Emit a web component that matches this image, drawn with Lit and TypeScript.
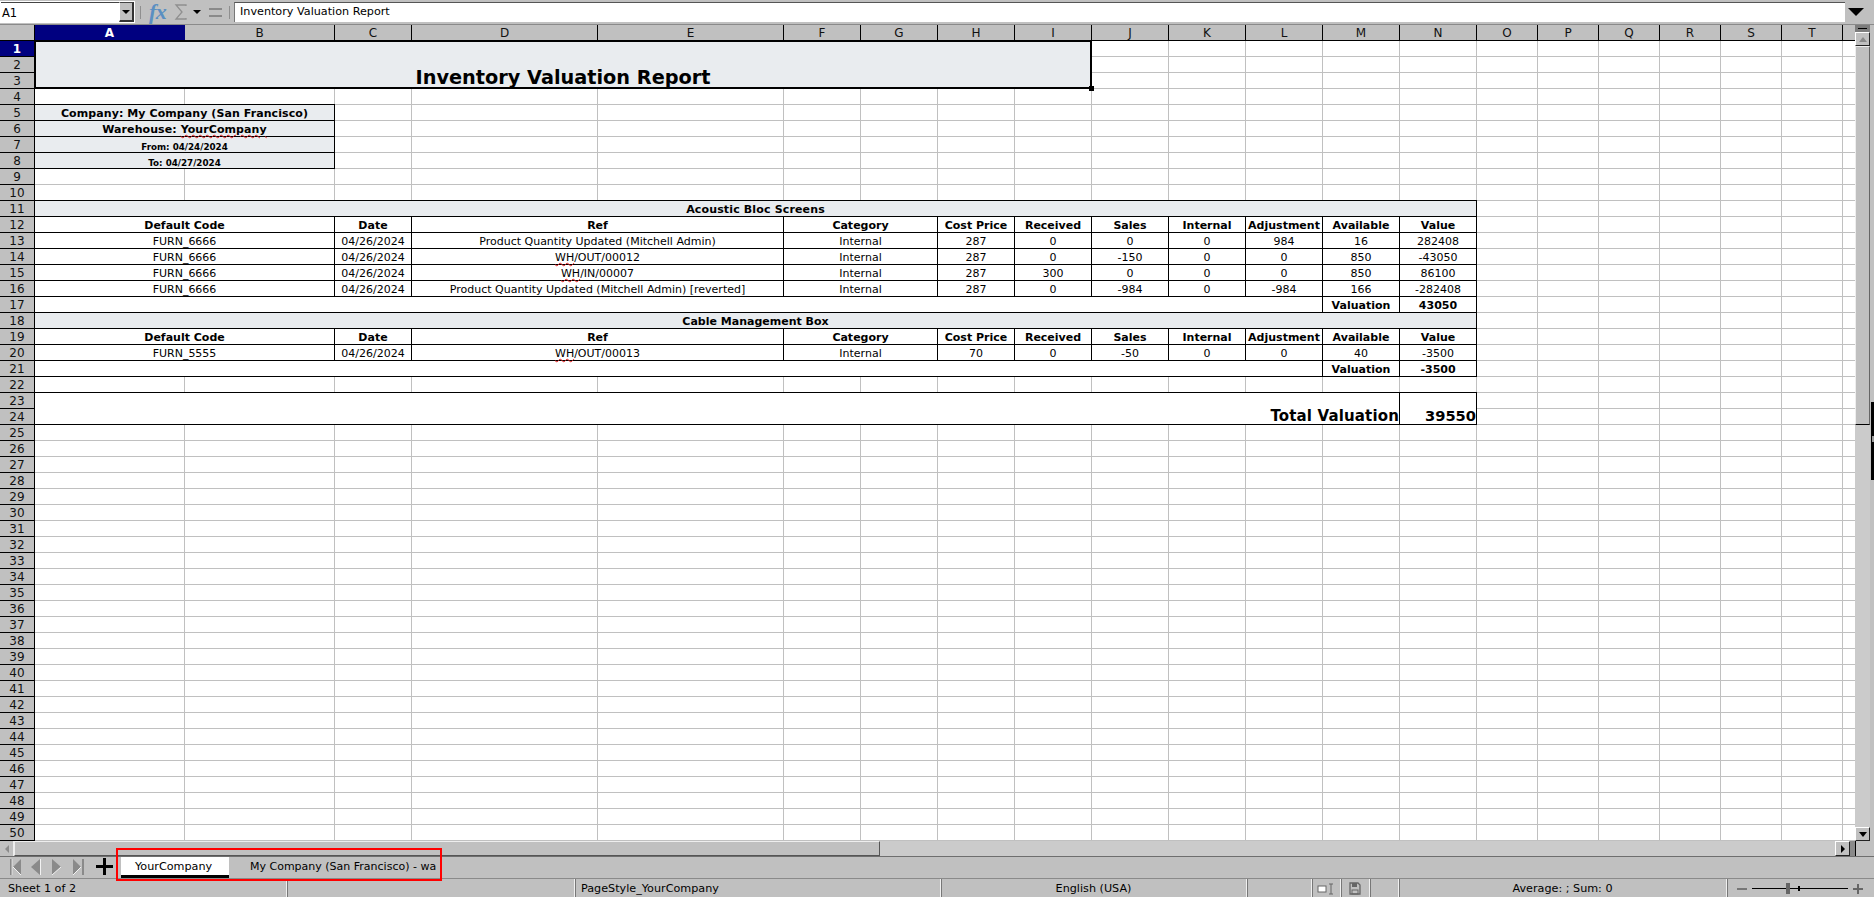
import { LitElement, html, css, svg, nothing } from "lit";
import { customElement } from "lit/decorators.js";

const COLS = [150, 150, 77, 186, 186, 77, 77, 77, 77, 77, 77, 77, 77, 77, 61, 61, 61, 61, 61, 61, 13];
const LETTERS = "ABCDEFGHIJKLMNOPQRST";
const ROWS = 50;

interface Cell {
  c: number; r: number; cs?: number; rs?: number;
  t?: unknown; k?: string;
}

const wh = (rest: string) => html`<span class="sq">WH</span>${rest}`;

function tableRow(r: number, vals: unknown[], k: string): Cell[] {
  const out: Cell[] = [];
  const spans: [number, number][] = [[1, 2], [3, 1], [4, 2], [6, 2], [8, 1], [9, 1], [10, 1], [11, 1], [12, 1], [13, 1], [14, 1]];
  spans.forEach(([c, cs], i) => out.push({ c, r, cs, t: vals[i], k }));
  return out;
}
const HEAD = ["Default Code", "Date", "Ref", "Category", "Cost Price", "Received", "Sales", "Internal", "Adjustment", "Available", "Value"];

const CELLS: Cell[] = [
  { c: 1, r: 1, cs: 9, rs: 3, t: "Inventory Valuation Report", k: "title" },
  { c: 1, r: 5, cs: 2, t: "Company: My Company (San Francisco)", k: "b fill bold wide" },
  { c: 1, r: 6, cs: 2, t: html`Warehouse: <span class="sq">YourCompany</span>`, k: "b fill bold wide" },
  { c: 1, r: 7, cs: 2, t: "From: 04/24/2024", k: "b fill bold small" },
  { c: 1, r: 8, cs: 2, t: "To: 04/27/2024", k: "b fill bold small" },
  { c: 1, r: 11, cs: 14, t: "Acoustic Bloc Screens", k: "b fill bold wider" },
  ...tableRow(12, HEAD, "b bold"),
  ...tableRow(13, ["FURN_6666", "04/26/2024", "Product Quantity Updated (Mitchell Admin)", "Internal", "287", "0", "0", "0", "984", "16", "282408"], "b"),
  ...tableRow(14, ["FURN_6666", "04/26/2024", wh("/OUT/00012"), "Internal", "287", "0", "-150", "0", "0", "850", "-43050"], "b"),
  ...tableRow(15, ["FURN_6666", "04/26/2024", wh("/IN/00007"), "Internal", "287", "300", "0", "0", "0", "850", "86100"], "b"),
  ...tableRow(16, ["FURN_6666", "04/26/2024", "Product Quantity Updated (Mitchell Admin) [reverted]", "Internal", "287", "0", "-984", "0", "-984", "166", "-282408"], "b"),
  { c: 1, r: 17, cs: 12, k: "b" },
  { c: 13, r: 17, t: "Valuation", k: "b bold" },
  { c: 14, r: 17, t: "43050", k: "b bold" },
  { c: 1, r: 18, cs: 14, t: "Cable Management Box", k: "b fill bold" },
  ...tableRow(19, HEAD, "b bold"),
  ...tableRow(20, ["FURN_5555", "04/26/2024", wh("/OUT/00013"), "Internal", "70", "0", "-50", "0", "0", "40", "-3500"], "b"),
  { c: 1, r: 21, cs: 12, k: "b" },
  { c: 13, r: 21, t: "Valuation", k: "b bold" },
  { c: 14, r: 21, t: "-3500", k: "b bold" },
  { c: 1, r: 23, cs: 13, rs: 2, t: "Total Valuation", k: "b bold total right" },
  { c: 14, r: 23, rs: 2, t: "39550", k: "b bold sum right" },
];

function buildCells(): Cell[] {
  const used = new Set<string>();
  CELLS.forEach((x) => {
    for (let r = x.r; r < x.r + (x.rs ?? 1); r++)
      for (let c = x.c; c < x.c + (x.cs ?? 1); c++) used.add(`${r}:${c}`);
  });
  const all = [...CELLS];
  for (let r = 1; r <= ROWS; r++)
    for (let c = 1; c <= COLS.length; c++)
      if (!used.has(`${r}:${c}`)) all.push({ c, r });
  all.sort((a, b) => a.r - b.r || a.c - b.c);
  return all;
}

@customElement("app-root")
export class AppRoot extends LitElement {
  static styles = css`
    :host {
      display: flex; flex-direction: column; width: 1874px; height: 897px; overflow: hidden;
      position: relative; background: #c0c0c0; color: #000;
      font-family: "DejaVu Sans", sans-serif; font-size: 11px;
    }
    .formula { height: 25px; flex: none; display: flex; align-items: center; box-sizing: border-box; border-bottom: 1px solid #8a8a8a; }
    .namebox { width: 135px; height: 22px; box-sizing: border-box; background: #fff; border: 1px solid #fff; display: flex; margin-right: 5px; flex: none; }
    .nameinput { flex: 1; font-size: 11.5px; line-height: 20px; padding-left: 1px; border-top: 1px solid #444; }
    .namebtn { width: 15px; background: #c0c0c0; border: 1px solid #333; border-left-color: #fff; border-top-color: #444; border-bottom-width: 2px; border-right-width: 2px; box-sizing: border-box; display: flex; align-items: center; justify-content: center; }
    .tri { width: 0; height: 0; border-left: 4px solid transparent; border-right: 4px solid transparent; border-top: 4px solid #000; }
    .vsep { width: 1px; height: 13px; background: #8f8f8f; flex: none; }
    .fx { font-family: "Liberation Serif", serif; font-style: italic; font-weight: bold; font-size: 22px; color: #5a8fc2; width: 20px; margin-left: 8px; line-height: 20px; letter-spacing: -0.5px; flex: none; }
    .sigma { width: 14px; height: 16px; margin-left: 5px; flex: none; }
    .tri.small { margin-left: 5px; margin-right: 8px; flex: none; }
    .eq { width: 13px; height: 9px; border-top: 2px solid #8a8a8a; border-bottom: 2px solid #8a8a8a; box-sizing: border-box; flex: none; margin-right: 7px; }
    .finput { width: 1611px; height: 20px; margin-left: 4px; box-sizing: border-box; background: #fff; border-top: 1px solid #555; border-left: 1px solid #777; font-size: 11.2px; line-height: 17px; padding-left: 5px; flex: none; }
    .fdrop { flex: none; margin-left: 3px; width: 0; height: 0; border-left: 8px solid transparent; border-right: 8px solid transparent; border-top: 8px solid #000; }

    .main { display: flex; flex: none; height: 816px; }
    .sheet { flex: none; width: 1855px; height: 816px; overflow: hidden; display: grid; background: #fff; }
    .h { background: #c0c0c0; box-sizing: border-box; border-right: 1px solid #000; border-bottom: 1px solid #000; display: flex; align-items: center; justify-content: center; font-size: 12px; color: #111; line-height: 1; }
    .h.on { background: #000080; color: #fff; font-weight: bold; }
    .h.colon { border-right-color: #000080; }
    .cell { box-sizing: border-box; border-right: 1px solid #c0c0c0; border-bottom: 1px solid #c0c0c0; display: flex; align-items: flex-end; justify-content: center; white-space: nowrap; line-height: 13px; background: #fff; font-size: 11px; }
    .cell.b { border-right-color: #000; border-bottom-color: #000; box-shadow: -1px 0 0 #000, 0 -1px 0 #000, -1px -1px 0 #000; }
    .fill { background: #e9ecef !important; }
    .bold { font-weight: bold; }
    .wide { letter-spacing: 0.08px; }
    .wider { letter-spacing: 0.15px; }
    .small { font-size: 8.75px; line-height: 9px; }
    .total { font-size: 15px; line-height: 16px; letter-spacing: 0.15px; }
    .sum { font-size: 14.67px; line-height: 16px; }
    .right { justify-content: flex-end; }
    .title { position: relative; z-index: 1; background: #e9ecef; border: 2px solid #000; border-left-width: 1px; border-top-width: 1px; box-shadow: -1px 0 0 #000, 0 -1px 0 #000; font-size: 19.3px; font-weight: bold; line-height: 19px; }
    .handle { position: absolute; right: -4px; bottom: -4px; width: 5px; height: 5px; background: #000; }
    .sq { position: relative; z-index: 2; text-decoration: underline wavy #e02020 1px; text-underline-offset: 1px; }

    .vbar { width: 19px; flex: none; display: flex; flex-direction: column; position: relative; box-sizing: border-box; border-right: 4px solid #c0c0c0; }
    .vhead { height: 7px; background: #7d7d7d; display: flex; align-items: center; justify-content: center; flex: none; }
    .vhead i { display: block; width: 9px; height: 1px; background: #000; }
    .sbtn { height: 14px; flex: none; background: #c0c0c0; border: 1px solid #fff; border-right-color: #222; border-bottom-color: #222; box-sizing: border-box; display: flex; align-items: center; justify-content: center; }
    .up { width: 0; height: 0; border-left: 4px solid transparent; border-right: 4px solid transparent; border-bottom: 5px solid #8a8a8a; }
    .down { width: 0; height: 0; border-left: 4px solid transparent; border-right: 4px solid transparent; border-top: 5px solid #000; }
    .vthumb { height: 379px; flex: none; background: #c0c0c0; border: 1px solid #eee; border-right-color: #666; border-bottom-color: #000; box-sizing: border-box; }
    .vtrack { flex: 1; background: #cbcbcb; }

    .hbar { height: 15px; flex: none; display: flex; background: #cbcbcb; }
    .hbtn { width: 14px; background: #c0c0c0; flex: none; display: flex; align-items: center; justify-content: center; border-right: 1px solid #eee; box-sizing: border-box; }
    .lt { width: 0; height: 0; border-top: 4px solid transparent; border-bottom: 4px solid transparent; border-right: 4px solid #8a8a8a; }
    .rt { width: 0; height: 0; border-top: 4px solid transparent; border-bottom: 4px solid transparent; border-left: 4px solid #000; }
    .hthumb { width: 866px; background: #c0c0c0; border: 1px solid #eee; border-right-color: #555; border-bottom-color: #555; box-sizing: border-box; flex: none; }
    .hspace { flex: 1; }
    .hbtnr { width: 15px; flex: none; background: #c0c0c0; border: 1px solid #fff; border-right-color: #222; border-bottom-color: #222; box-sizing: border-box; display: flex; align-items: center; justify-content: center; }
    .hend { width: 24px; flex: none; background: #c0c0c0; display: flex; }
    .hend i { display: block; width: 5px; background: #8a8a8a; border-right: 1px solid #000; }

    .tabs { height: 22px; flex: none; box-sizing: border-box; border-top: 1px solid #6e6e6e; display: flex; align-items: stretch; }
    .nav { width: 96px; display: flex; align-items: center; padding: 0 0 1px 10px; box-sizing: border-box; gap: 7px; flex: none; }
    .nav svg { width: 14px; height: 18px; flex: none; display: block; }
    .plus { width: 17px; height: 17px; flex: none; margin-top: 1px; }
    .tab { font-size: 11.2px; display: flex; align-items: center; box-sizing: border-box; white-space: nowrap; height: 21px; flex: none; }
    .tab.active { margin-left: 8px; width: 108px; background: #fff; border-bottom: 3px solid #000; padding-left: 14px; }
    .tab.other { margin-left: 21px; font-size: 11px; padding-bottom: 3px; }

    .status { height: 20px; flex: none; display: flex; box-sizing: border-box; border-top: 1px solid #8a8a8a; font-size: 11.2px; align-items: stretch; line-height: 19px; }
    .sec { box-sizing: border-box; border-right: 1px solid #f0f0f0; box-shadow: 1px 0 0 #777; flex: none; white-space: nowrap; display: flex; align-items: center; }
    .sec.c { justify-content: center; }
    .s1 { width: 287px; padding-left: 8px; }
    .s2 { width: 288px; }
    .s3 { width: 366px; padding-left: 6px; }
    .s3b { width: 306px; }
    .s4 { width: 65px; }
    .s5 { width: 29px; }
    .s6 { width: 29px; }
    .s7 { width: 29px; }
    .s8 { width: 328px; }
    .zoom { flex: 1; position: relative; display: flex; align-items: center; padding-left: 10px; gap: 5px; }
    .zm { width: 10px; height: 2px; background: #777; flex: none; }
    .track { width: 96px; height: 1px; background: #000; position: relative; flex: none; }
    .zthumb { position: absolute; left: 34px; top: -5px; width: 4px; height: 11px; background: #666; }
    .ztick { position: absolute; left: 46px; top: -2px; width: 2px; height: 5px; background: #000; }
    .zplus { width: 10px; height: 10px; flex: none; }

    .redbox { position: absolute; left: 116px; top: 848px; width: 326px; height: 33px; box-sizing: border-box; border: 2px solid #f00; pointer-events: none; }
    .edge { position: absolute; left: 1871px; top: 402px; width: 3px; height: 78px; background: #000; }
    .edge i { position: absolute; left: 1px; top: 34px; width: 2px; height: 6px; background: #999; display: block; }
  `;

  private renderSheet() {
    const cols = `35px ${COLS.map((w) => w + "px").join(" ")}`;
    const rows = `16px repeat(${ROWS}, 16px)`;
    const byRow = buildCells();
    let idx = 0;
    const out: unknown[] = [];
    out.push(html`<div class="h" style="grid-column:1;grid-row:1"></div>`);
    COLS.forEach((_, i) => {
      const l = LETTERS[i] ?? "";
      out.push(html`<div class="h ${i === 0 ? "on colon" : ""}" style="grid-column:${i + 2};grid-row:1">${l}</div>`);
    });
    for (let r = 1; r <= ROWS; r++) {
      out.push(html`<div class="h ${r === 1 ? "on" : ""}" style="grid-column:1;grid-row:${r + 1}">${r}</div>`);
      while (idx < byRow.length && byRow[idx].r === r) {
        const x = byRow[idx++];
        const k = x.k ?? "";
        const place = `grid-column:${x.c + 1} / span ${x.cs ?? 1};grid-row:${x.r + 1} / span ${x.rs ?? 1}`;
        out.push(html`<div class="cell ${k}" style=${place}>${x.t != null ? html`<span>${x.t}</span>` : nothing}${k === "title" ? html`<span class="handle"></span>` : nothing}</div>`);
      }
    }
    return html`<div class="sheet" style="grid-template-columns:${cols};grid-template-rows:${rows}">${out}</div>`;
  }

  private navIcon(kind: number) {
    const paths = [
      svg`<rect x="0" y="1" width="2" height="16" fill="#8a8a8a"/><path d="M2 1 V17" stroke="#f2f2f2" stroke-width=".7"/><path d="M11 1 L3 9 L11 17 Z" fill="#8a8a8a"/><path d="M11 17 L3 9" stroke="#f2f2f2"/>`,
      svg`<path d="M9 1 L0 9 L9 17 Z" fill="#8a8a8a"/><path d="M9.5 1 V17" stroke="#f2f2f2"/>`,
      svg`<path d="M0 1 L9 9 L0 17 Z" fill="#8a8a8a"/><path d="M0 17 L9 9" stroke="#f2f2f2"/>`,
      svg`<path d="M0 1 L8 9 L0 17 Z" fill="#8a8a8a"/><path d="M0 17 L8 9" stroke="#f2f2f2"/><rect x="9" y="1" width="2" height="16" fill="#8a8a8a"/>`,
    ];
    return html`<svg viewBox="0 0 14 18">${paths[kind]}</svg>`;
  }

  render() {
    return html`
      <div class="formula">
        <div class="namebox">
          <div class="nameinput">A1</div>
          <div class="namebtn"><div class="tri"></div></div>
        </div>
        <div class="vsep"></div>
        <div class="fx">fx</div>
        <svg class="sigma" viewBox="0 0 14 16"><path d="M12 2 V1 H2 L8 8 L2 15 H12 V14" fill="none" stroke="#8f8f8f" stroke-width="1.3"/></svg>
        <div class="tri small"></div>
        <div class="eq"></div>
        <div class="vsep"></div>
        <div class="finput">Inventory Valuation Report</div>
        <div class="fdrop"></div>
      </div>
      <div class="main">
        ${this.renderSheet()}
        <div class="vbar">
          <div class="vhead"><i></i></div>
          <div class="sbtn"><div class="up"></div></div>
          <div class="vthumb"></div>
          <div class="vtrack"></div>
          <div class="sbtn"><div class="down"></div></div>
        </div>
      </div>
      <div class="hbar">
        <div class="hbtn"><div class="lt"></div></div>
        <div class="hthumb"></div>
        <div class="hspace"></div>
        <div class="hbtnr"><div class="rt"></div></div>
        <div class="hend"><i></i></div>
      </div>
      <div class="tabs">
        <div class="nav">${[0, 1, 2, 3].map((k) => this.navIcon(k))}</div>
        <svg class="plus" viewBox="0 0 17 17"><path d="M8.5 0 V17 M0 8.5 H17" stroke="#000" stroke-width="3"/></svg>
        <div class="tab active">YourCompany</div>
        <div class="tab other">My Company (San Francisco) - wa</div>
      </div>
      <div class="status">
        <div class="sec s1">Sheet 1 of 2</div>
        <div class="sec s2"></div>
        <div class="sec s3">PageStyle_YourCompany</div>
        <div class="sec c s3b">English (USA)</div>
        <div class="sec s4"></div>
        <div class="sec c s5">
          <svg width="18" height="14" viewBox="0 0 18 14"><rect x="1" y="4" width="8" height="6" fill="#fff" stroke="#666"/><path d="M12 2 H16 M14 2 V12 M12 12 H16" stroke="#666" fill="none"/></svg>
        </div>
        <div class="sec c s6">
          <svg width="12" height="13" viewBox="0 0 12 13"><path d="M1 1 H9 L11 3 V12 H1 Z" fill="none" stroke="#666" stroke-width="1.3"/><rect x="3" y="1" width="5" height="4" fill="#666"/><rect x="3" y="8" width="6" height="4" fill="none" stroke="#666"/></svg>
        </div>
        <div class="sec s7"></div>
        <div class="sec c s8">Average: ; Sum: 0</div>
        <div class="zoom">
          <div class="zm"></div>
          <div class="track"><div class="zthumb"></div><div class="ztick"></div></div>
          <svg class="zplus" viewBox="0 0 10 10"><path d="M5 0 V10 M0 5 H10" stroke="#666" stroke-width="2"/></svg>
        </div>
      </div>
      <div class="redbox"></div>
      <div class="edge"><i></i></div>
    `;
  }
}
